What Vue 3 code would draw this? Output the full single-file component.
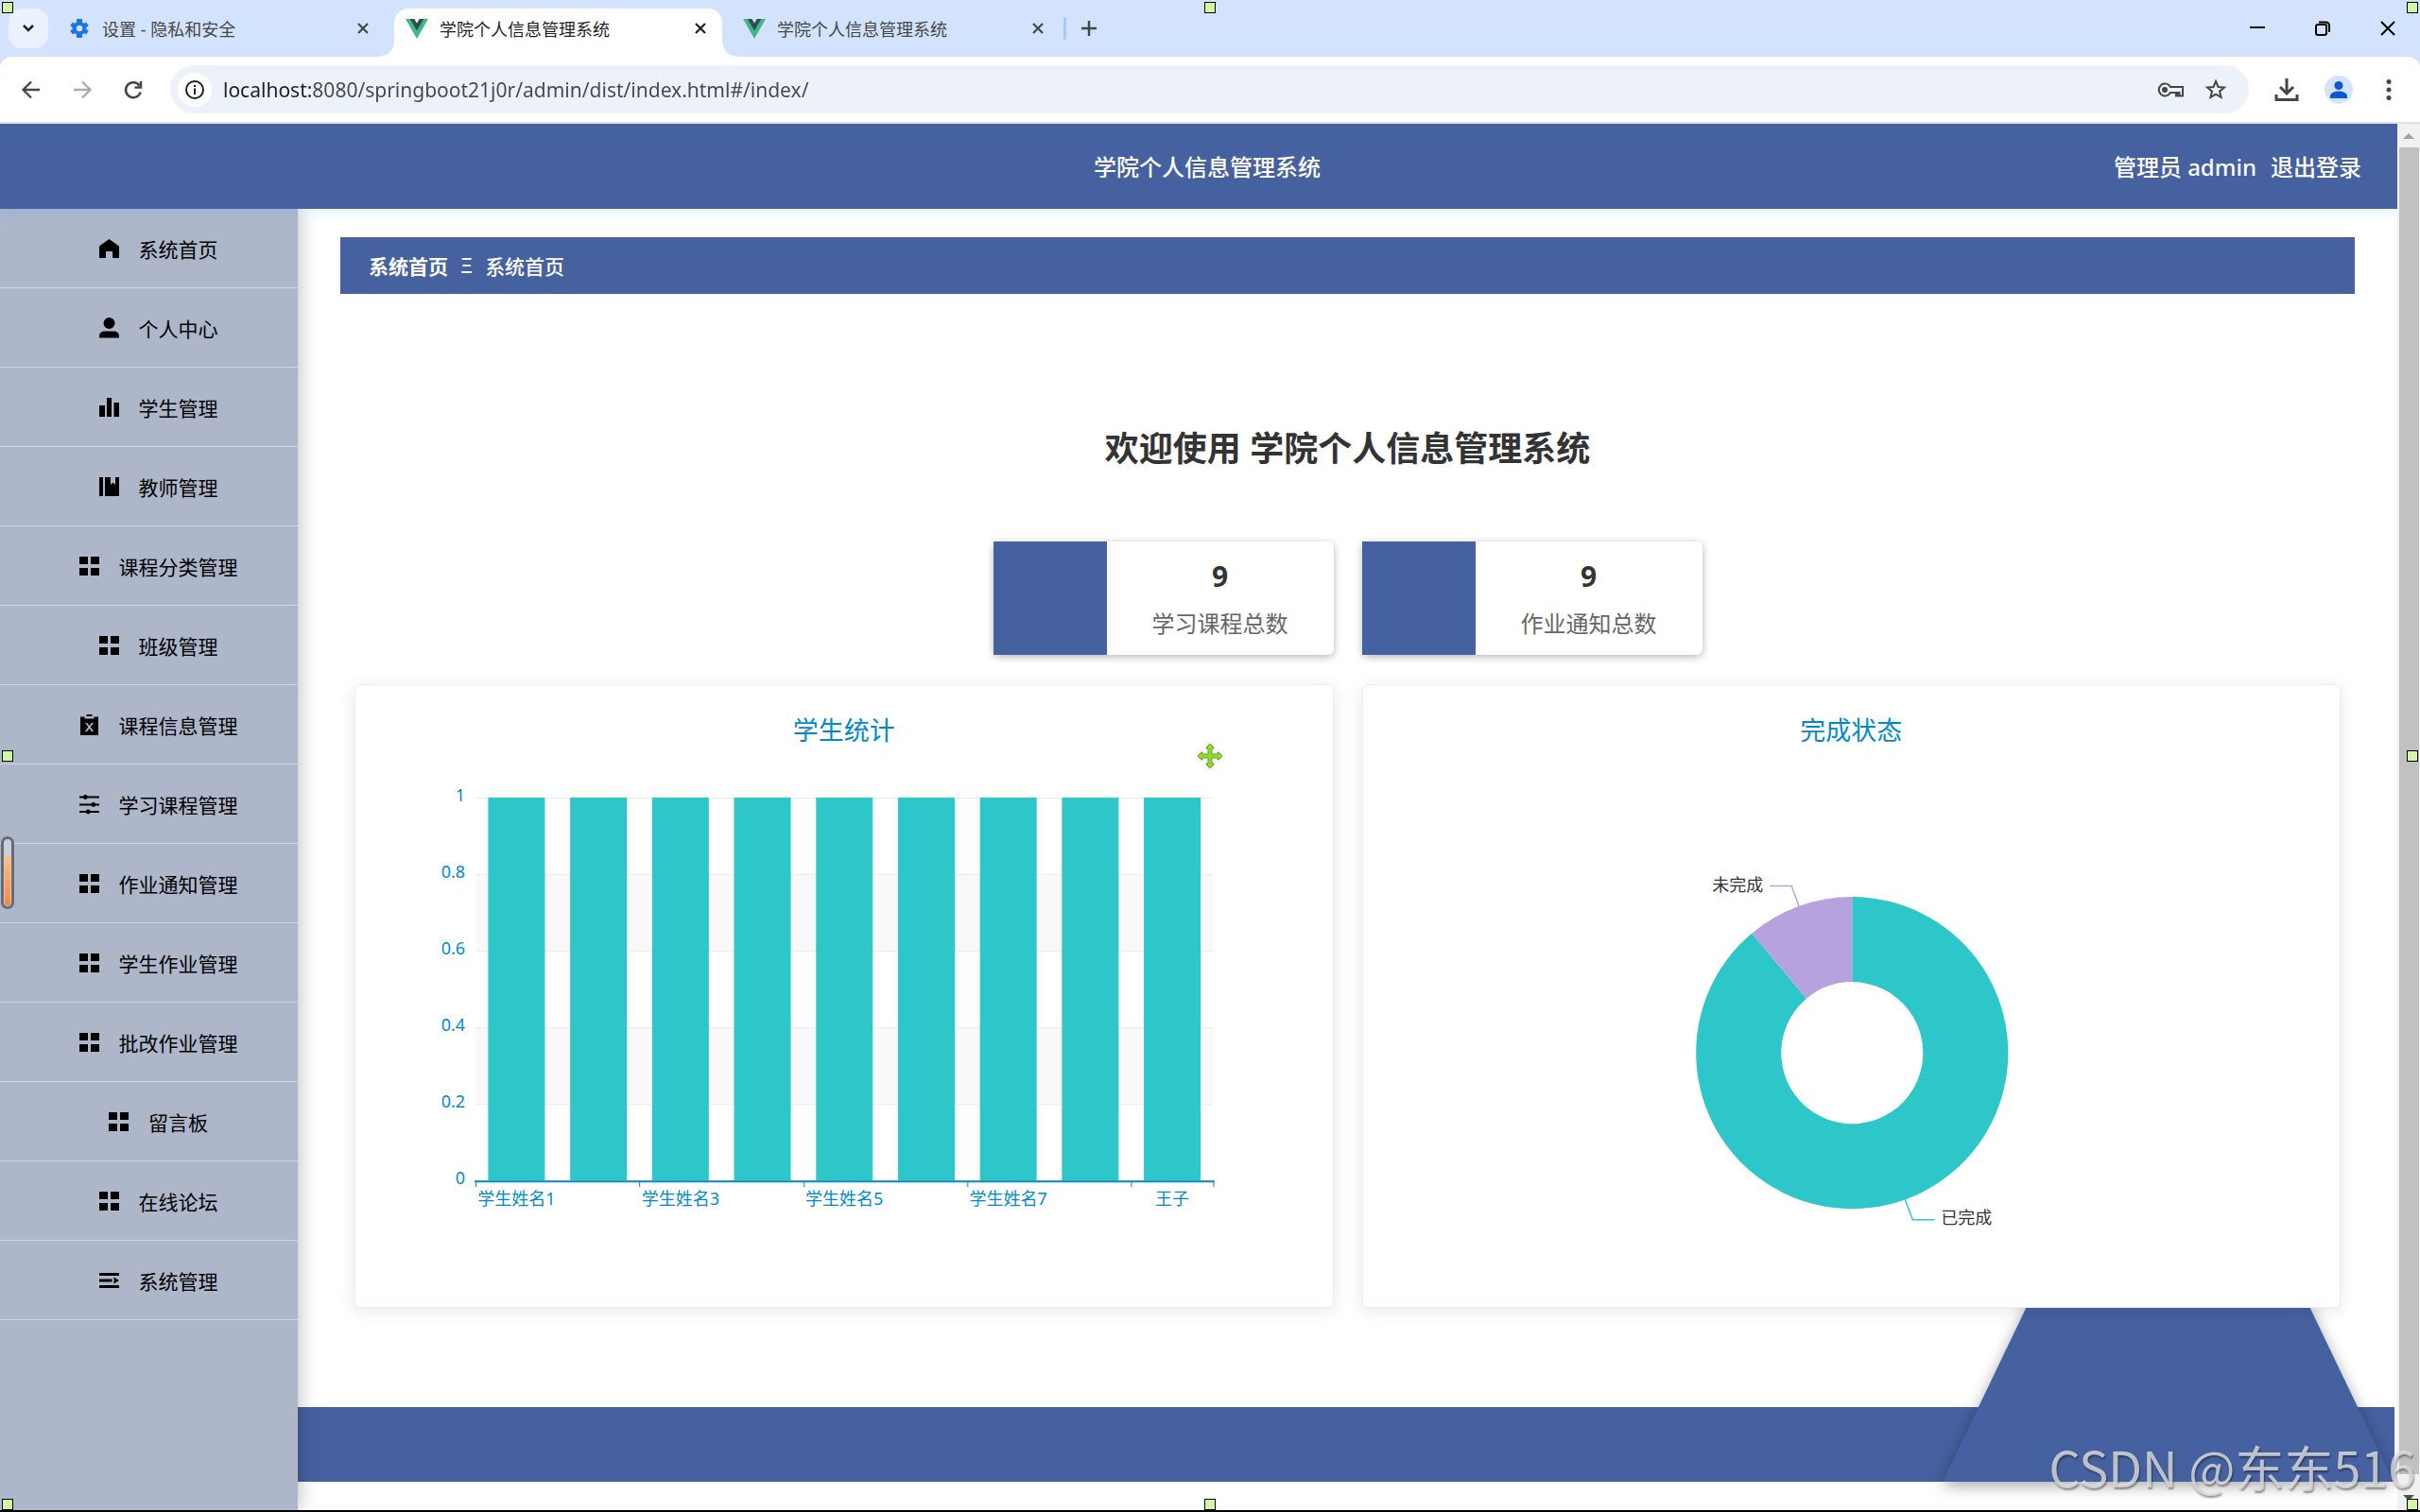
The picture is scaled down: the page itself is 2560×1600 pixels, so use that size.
<script setup>
import { ref } from 'vue'

const systemName = '学院个人信息管理系统'
const url = ref('localhost:8080/springboot21j0r/admin/dist/index.html#/index/')

const tabs = [
  { title: '设置 - 隐私和安全', icon: 'gear', active: false },
  { title: systemName, icon: 'vue', active: true },
  { title: systemName, icon: 'vue', active: false }
]

const menu = [
  { label: '系统首页', icon: 'home' },
  { label: '个人中心', icon: 'user' },
  { label: '学生管理', icon: 'bars' },
  { label: '教师管理', icon: 'book' },
  { label: '课程分类管理', icon: 'grid' },
  { label: '班级管理', icon: 'grid' },
  { label: '课程信息管理', icon: 'clip' },
  { label: '学习课程管理', icon: 'sliders' },
  { label: '作业通知管理', icon: 'grid' },
  { label: '学生作业管理', icon: 'grid' },
  { label: '批改作业管理', icon: 'grid' },
  { label: '留言板', icon: 'grid' },
  { label: '在线论坛', icon: 'grid' },
  { label: '系统管理', icon: 'list' }
]

const menuIcons = {
  home: 'M10.500 0 21 7.500V20h-7v-7h-7v7H0V7.500z',
  user: 'M10.500-1a6 6 0 0 1 0 12a6 6 0 0 1 0-12zM6 13.500h9q6 0 6 5.500v1.500H0V19q0-5.500 6-5.500z',
  bars: 'M0 8h6v12H0zM8 0h5v20H8zM15.500 5h5.500v15h-5.500z',
  book: 'M0 0h4v20H0zM6 0h6v8l2.500-2.500L17 8V0h4v20H6z',
  grid: 'M0 0h9v8H0zM12 0h9v8h-9zM0 12h9v8H0zM12 12h9v8h-9z',
  clip: 'M7.500-1h6v2h-6zM1 1.500h4.500v2h10v-2H20V21H1zM6 8l3.400 4.200L5.800 17h2.300l2.400-3.300 2.400 3.300h2.300l-3.600-4.800L15 8h-2.200l-2.300 2.900L8.200 8z',
  sliders: 'M0 1.500h4a2.500 2.500 0 0 1 4.500 0H21v2H8.500a2.500 2.500 0 0 1-4.500 0H0zM0 9.500h12.500a2.500 2.500 0 0 1 4.500 0h4v2h-4a2.500 2.500 0 0 1-4.500 0H0zM0 17h7a2.500 2.500 0 0 1 4.500 0H21v2h-9.500a2.500 2.500 0 0 1-4.500 0H0z',
  list: 'M0 2h21v3H0zM0 8.500h13.500v3H0zM15.500 6.500l5.500 3.500-5.500 3.500zM0 15h21v3H0z'
}

const stats = [
  { value: 9, label: '学习课程总数' },
  { value: 9, label: '作业通知总数' }
]

const plot = { left: 127, right: 907, top: 51, bottom: 456 }
const students = ['学生姓名1', '学生姓名2', '学生姓名3', '学生姓名4', '学生姓名5', '学生姓名6', '学生姓名7', '学生姓名8', '王子']
const step = (plot.right - plot.left) / students.length
const bars = students.map((name, i) => ({
  name,
  x: plot.left + step * (i + 0.5),
  labelled: i % 2 === 0
}))
const ticks = [0, 2, 4, 6, 8, 9].map(i => Math.round(plot.left + step * i))
const levels = ['1', '0.8', '0.6', '0.4', '0.2', '0'].map((label, i) => ({ label, y: plot.top + i * 81 }))

const handles = ['tl', 'tc', 'tr', 'ml', 'mr', 'bl', 'bc', 'br']
</script>

<template>
  <div class="browser">
    <div class="tabstrip">
      <button class="tab-search" aria-label="搜索标签页">
        <svg width="14" height="10" viewBox="0 0 14 10"><path d="M2 2l5 5 5-5" fill="none" stroke="#1f1f1f" stroke-width="2.500" /></svg>
      </button>
      <div v-for="(tab, i) in tabs" :key="i" class="tab" :class="{ active: tab.active }">
        <svg v-if="tab.icon === 'gear'" class="favicon" viewBox="0 0 24 24">
          <path fill="#1a73e8" fill-rule="evenodd" d="M19.400 13a7.500 7.500 0 0 0 0-2l2.200-1.700-2.100-3.600-2.600 1a8 8 0 0 0-1.700-1L14.800 2H9.200l-.4 3.700a8 8 0 0 0-1.700 1l-2.600-1-2.100 3.600L4.600 11a7.500 7.500 0 0 0 0 2l-2.200 1.700 2.100 3.600 2.600-1a8 8 0 0 0 1.700 1l.4 3.700h5.600l.4-3.700a8 8 0 0 0 1.700-1l2.600 1 2.100-3.600zM12 8.700a3.300 3.300 0 1 1 0 6.600a3.300 3.300 0 0 1 0-6.600z" />
        </svg>
        <svg v-else class="favicon" viewBox="0 0 24 24">
          <path fill="#41b883" d="M0 2h9l3 5 3-5h9L12 23z" />
          <path fill="#35495e" d="M4.800 2H9.300l2.700 4.700L14.700 2h4.500L12 14.500z" />
        </svg>
        <span class="tab-title">{{ tab.title }}</span>
        <button class="tab-close" aria-label="关闭">
          <svg width="14" height="14" viewBox="0 0 14 14"><path d="M2 2l10 10M12 2L2 12" fill="none" stroke="currentColor" stroke-width="2.200" /></svg>
        </button>
      </div>
      <span class="tab-divider"></span>
      <button class="new-tab" aria-label="新标签页">
        <svg width="18" height="18" viewBox="0 0 18 18"><path d="M9 1v16M1 9h16" fill="none" stroke="#444746" stroke-width="2.500" /></svg>
      </button>
      <div class="window-controls">
        <button aria-label="最小化"><svg width="16" height="16" viewBox="0 0 16 16"><path d="M0 7h16" stroke="#000" stroke-width="2" /></svg></button>
        <button aria-label="还原"><svg width="16" height="16" viewBox="0 0 16 16" fill="none" stroke="#000" stroke-width="2"><rect x="1" y="4" width="11" height="11" rx="2" /><path d="M4 1.500h7q4 0 4 4V12" /></svg></button>
        <button aria-label="关闭窗口"><svg width="16" height="16" viewBox="0 0 16 16"><path d="M1 1l14 14M15 1L1 15" stroke="#000" stroke-width="2" /></svg></button>
      </div>
    </div>

    <div class="toolbar">
      <div class="nav-buttons">
        <button aria-label="后退"><svg width="22" height="22" viewBox="0 0 22 22" fill="none" stroke="#444746" stroke-width="2.300"><path d="M20 11H3M11 2.500L2.500 11l8.500 8.500" /></svg></button>
        <button aria-label="前进"><svg width="22" height="22" viewBox="0 0 22 22" fill="none" stroke="#a9abab" stroke-width="2.300"><path d="M2 11h17M11 2.500l8.500 8.500-8.500 8.500" /></svg></button>
        <button aria-label="重新加载"><svg width="22" height="22" viewBox="0 0 22 22" fill="none" stroke="#444746" stroke-width="2.500"><path d="M18.700 13.500A8 8 0 1 1 17.500 6.500M19 2v6.500h-6.500" /></svg></button>
      </div>
      <div class="omnibox">
        <button class="site-info" aria-label="网站信息">
          <svg width="22" height="22" viewBox="0 0 22 22" fill="none" stroke="#1f1f1f" stroke-width="2"><circle cx="11" cy="11" r="9" /><path d="M11 9.500v6.500M11 6v2" /></svg>
        </button>
        <input v-model="url" class="address" type="text" aria-label="地址" spellcheck="false" />
        <button class="omni-action" aria-label="密码">
          <svg width="28" height="18" viewBox="0 0 28 18" fill="none" stroke="#444746" stroke-width="2"><path d="M14 6A6.500 6.500 0 1 0 14 12h6v3.500h2V12h1.500v3.500H27V6z" /><circle cx="8" cy="9" r="3" fill="#444746" stroke="none" /></svg>
        </button>
        <button class="omni-action" aria-label="收藏">
          <svg width="24" height="24" viewBox="0 0 24 24" fill="none" stroke="#444746" stroke-width="2"><path d="M12 3l2.500 6 6.500.5-5 4.200 1.600 6.300L12 16.600 6.400 20 8 13.700 3 9.500 9.500 9z" /></svg>
        </button>
      </div>
      <button class="tool" aria-label="下载">
        <svg width="26" height="26" viewBox="0 0 26 26" fill="none" stroke="#444746" stroke-width="3"><path d="M13 1v15M6 10l7 7 7-7M2 18v5.500h22V18" /></svg>
      </button>
      <button class="avatar" aria-label="个人资料">
        <svg width="30" height="30" viewBox="0 0 30 30"><circle cx="15" cy="15" r="15" fill="#d3e3fd" /><circle cx="15" cy="10.500" r="4.500" fill="#0b57d0" /><path d="M6 24v-2.500c0-3 5-5 9-5s9 2 9 5V24z" fill="#0b57d0" /></svg>
      </button>
      <button class="tool" aria-label="更多">
        <svg width="6" height="24" viewBox="0 0 6 24" fill="#444746"><circle cx="3" cy="3.500" r="2.500" /><circle cx="3" cy="12" r="2.500" /><circle cx="3" cy="20.500" r="2.500" /></svg>
      </button>
    </div>

    <div class="viewport">
      <div class="page">
        <header class="topbar">
          <span></span>
          <span class="system-name">{{ systemName }}</span>
          <div class="account">
            <span>管理员 admin</span>
            <a href="#">退出登录</a>
          </div>
        </header>

        <div class="body">
          <nav class="sidebar">
            <a v-for="item in menu" :key="item.label" href="#" class="menu-item">
              <svg class="menu-icon" viewBox="0 -1 21 22"><path :d="menuIcons[item.icon]" fill-rule="evenodd" /></svg>
              <span>{{ item.label }}</span>
            </a>
          </nav>

          <main class="main">
            <div class="breadcrumb">
              <b>系统首页</b>
              <span>Ξ</span>
              <span>系统首页</span>
            </div>

            <h1>欢迎使用 {{ systemName }}</h1>

            <div class="stats">
              <div v-for="stat in stats" :key="stat.label" class="stat">
                <div class="stat-color"></div>
                <div class="stat-text">
                  <strong>{{ stat.value }}</strong>
                  <span>{{ stat.label }}</span>
                </div>
              </div>
            </div>

            <div class="charts">
              <section class="card">
                <h2>学生统计</h2>
                <svg class="chart" viewBox="0 0 1033 590">
                  <rect :x="plot.left" y="132" :width="plot.right - plot.left" height="81" fill="#f9f9f9" />
                  <rect :x="plot.left" y="294" :width="plot.right - plot.left" height="81" fill="#f9f9f9" />
                  <rect v-for="level in levels" :key="'g' + level.label" :x="plot.left" :y="level.y" :width="plot.right - plot.left" height="1" fill="#eaeaea" />
                  <rect v-for="bar in bars" :key="bar.name" :x="bar.x - 30" :y="plot.top" width="60" :height="plot.bottom - plot.top" fill="#2ec7c9" />
                  <g fill="#008acd">
                    <rect :x="plot.left - 1" :y="plot.bottom" :width="plot.right - plot.left + 2" height="2" />
                    <rect v-for="x in ticks" :key="x" :x="x" :y="plot.bottom" width="1" height="7" />
                    <text v-for="level in levels" :key="level.label" x="116" :y="level.y + 4" text-anchor="end">{{ level.label }}</text>
                    <template v-for="bar in bars" :key="'l' + bar.name">
                      <text v-if="bar.labelled" :x="bar.x" y="482" text-anchor="middle">{{ bar.name }}</text>
                    </template>
                  </g>
                </svg>
              </section>

              <section class="card">
                <h2>完成状态</h2>
                <svg class="chart" viewBox="0 0 1033 590">
                  <g transform="translate(517 321)">
                    <path fill="#2ec7c9" d="M0-165A165 165 0 1 1-106.060-126.400L-48.210-57.450A75 75 0 1 0 0-75z" />
                    <path fill="#b6a2de" d="M-106.060-126.400A165 165 0 0 1 0-165V-75A75 75 0 0 0-48.210-57.450z" />
                  </g>
                  <path d="M430 144.500h23l8 22" fill="none" stroke="#b6a2de" stroke-width="1.500" />
                  <path d="M573 476l8 21.500h23" fill="none" stroke="#2ec7c9" stroke-width="1.500" />
                  <g fill="#333">
                    <text x="423" y="150" text-anchor="end">未完成</text>
                    <text x="611" y="502">已完成</text>
                  </g>
                </svg>
              </section>
            </div>

            <footer class="footer">
              <svg class="trapezoid" width="477" height="223" viewBox="0 0 477 223"><path d="M0 223L107 0H370L477 223z" fill="#4661a0" /></svg>
            </footer>
          </main>
        </div>
      </div>

      <div class="scrollbar">
        <svg width="12" height="6" viewBox="0 0 12 6"><path d="M0 6l6-6 6 6z" fill="#a3a3a3" /></svg>
        <div class="thumb"></div>
        <svg width="12" height="6" viewBox="0 0 12 6"><path d="M0 0h12L6 6z" fill="#505050" /></svg>
      </div>
    </div>

    <span v-for="h in handles" :key="h" class="handle" :class="h"></span>
    <svg class="move" width="28" height="28" viewBox="0 0 28 28">
      <path d="M14 1l4 4v1h-2v6h6v-2h1l4 4-4 4h-1v-2h-6v6h2v1l-4 4-4-4v-1h2v-6H6v2H5l-4-4 4-4h1v2h6V6h-2V5z" fill="#8edb2c" stroke="#62a51a" />
    </svg>
    <div class="gauge"><i></i></div>
    <div class="watermark">CSDN @东东516</div>
  </div>
</template>

<style>
body {
  margin: 0;
}
</style>

<style scoped>
.browser {
  position: relative;
  display: flex;
  flex-direction: column;
  box-sizing: border-box;
  min-height: 100vh;
  overflow: hidden;
  border-bottom: 2px solid #000;
  background: #fff;
  font-family: "Noto Sans", "Noto Sans CJK SC", sans-serif;
  color: #333;
}

button {
  display: flex;
  align-items: center;
  justify-content: center;
  padding: 0;
  border: 0;
  background: none;
}

a {
  color: inherit;
  text-decoration: none;
}

svg {
  display: block;
  flex: none;
}

.tabstrip {
  display: flex;
  align-items: center;
  height: 60px;
  background: #d3e3fd;
}

.tab-search {
  width: 42px;
  height: 42px;
  margin: 0 9px;
  border-radius: 14px;
  background: #ebf1fd;
}

.tab {
  position: relative;
  display: flex;
  align-items: center;
  gap: 12px;
  box-sizing: border-box;
  width: 347px;
  height: 42px;
  margin-right: 10px;
  padding: 0 11px 0 12px;
  font-size: 18px;
  color: #444746;
}

.tab:nth-of-type(3) {
  margin-right: 4px;
}

.tab.active {
  align-self: flex-end;
  height: 51px;
  padding-bottom: 9px;
  border-radius: 15px 15px 0 0;
  background: #fff;
  color: #1f1f1f;
}

.tab.active::before,
.tab.active::after {
  content: "";
  position: absolute;
  bottom: 0;
  width: 15px;
  height: 15px;
}

.tab.active::before {
  right: 100%;
  background: radial-gradient(circle at 0 0, transparent 14px, #fff 15px);
}

.tab.active::after {
  left: 100%;
  background: radial-gradient(circle at 100% 0, transparent 14px, #fff 15px);
}

.favicon {
  width: 24px;
  height: 24px;
}

.tab-title {
  flex: 1;
}

.tab-close,
.new-tab {
  width: 24px;
  height: 24px;
  color: inherit;
}

.tab-divider {
  width: 3px;
  height: 24px;
  border-radius: 2px;
  background: #a8c7fa;
}

.new-tab {
  margin-left: 12px;
}

.window-controls {
  display: flex;
  margin-left: auto;
}

.window-controls button {
  width: 69px;
  height: 60px;
}

.toolbar {
  display: flex;
  align-items: center;
  box-sizing: border-box;
  height: 71px;
  padding: 0 30px 0 0;
  border-bottom: 2px solid #dfe1e3;
  border-radius: 12px 12px 0 0;
  background: #fff;
}

.browser::before {
  content: "";
  position: absolute;
  z-index: -1;
  top: 60px;
  right: 0;
  left: 0;
  height: 12px;
  background: #d3e3fd;
}

.browser {
  isolation: isolate;
}

.nav-buttons {
  display: flex;
  gap: 18px;
  padding: 0 21px 0 15px;
}

.nav-buttons button {
  width: 36px;
  height: 36px;
}

.omnibox {
  display: flex;
  flex: 1;
  align-items: center;
  height: 51px;
  border-radius: 26px;
  background: #ecf1fa;
  padding: 0 20px 0 8px;
}

.site-info {
  width: 36px;
  height: 36px;
  border-radius: 50%;
  background: #fff;
}

.address {
  flex: 1;
  margin: 0 12px;
  padding: 0;
  border: 0;
  outline: 0;
  background: linear-gradient(90deg, #1f1f1f 92px, #474747 92px);
  background-clip: text;
  -webkit-text-fill-color: transparent;
  font-family: inherit;
  font-size: 21px;
}

.omni-action {
  width: 30px;
  height: 36px;
  margin-left: 18px;
}

.tool {
  height: 36px;
}

.toolbar > .tool {
  margin-left: 27px;
}

.avatar {
  margin-left: 27px;
}

.toolbar > .tool:last-child {
  margin-left: 35px;
}

.viewport {
  display: flex;
  flex: 1;
}

.page {
  display: flex;
  flex: 1;
  flex-direction: column;
  min-width: 0;
  overflow: hidden;
}

.topbar {
  position: relative;
  z-index: 3;
  display: grid;
  grid-template-columns: 1fr auto 1fr;
  align-items: center;
  box-sizing: border-box;
  height: 90px;
  padding: 0 38px 2px 56px;
  background: #4661a0;
  box-shadow: 0 2px 12px rgba(64, 158, 255, 0.2);
  color: #fff;
  font-size: 24px;
  font-weight: 500;
}

.account {
  display: flex;
  justify-content: flex-end;
  gap: 15px;
}

.body {
  display: flex;
  flex: 1;
}

.sidebar {
  position: relative;
  z-index: 2;
  width: 315px;
  background: #aeb6ca;
  box-shadow: 0 0 20px rgba(0, 0, 0, 0.3);
}

.menu-item {
  display: flex;
  align-items: center;
  justify-content: center;
  gap: 21px;
  box-sizing: border-box;
  height: 84px;
  padding-left: 20px;
  border-bottom: 1px solid #d3d6dc;
  color: #000;
  font-size: 21px;
}

.menu-icon {
  width: 21px;
  height: 22px;
}

.main {
  display: flex;
  flex: 1;
  flex-direction: column;
  min-width: 0;
}

.breadcrumb {
  display: flex;
  align-items: center;
  gap: 13px;
  height: 60px;
  margin: 30px 45px 0;
  padding: 0 30px;
  background: #4661a0;
  color: #fff;
  font-size: 21px;
  font-weight: 500;
}

h1 {
  margin: 137px 0 71px;
  font-size: 36px;
  line-height: 54px;
  text-align: center;
}

.stats {
  display: flex;
  justify-content: center;
  gap: 30px;
}

.stat {
  display: flex;
  width: 360px;
  height: 120px;
  border-radius: 6px;
  background: #fff;
  box-shadow: 0 2px 8px rgba(0, 0, 0, 0.3);
}

.stat-color {
  width: 120px;
  background: #4661a0;
}

.stat-text {
  display: flex;
  flex: 1;
  flex-direction: column;
  align-items: center;
  justify-content: center;
  padding-top: 4px;
  line-height: 50px;
  color: #666;
  font-size: 24px;
}

.stat-text strong {
  color: #333;
  font-size: 30px;
}

.charts {
  position: relative;
  z-index: 1;
  display: grid;
  grid-template-columns: 1fr 1fr;
  gap: 30px;
  margin: 31px 60px 105px;
}

.card {
  border: 1px solid #ebeef5;
  border-radius: 6px;
  background: #fff;
  box-shadow: 0 3px 18px rgba(0, 0, 0, 0.1);
}

h2 {
  margin: 0;
  padding-top: 28px;
  color: #008acd;
  font-size: 27px;
  font-weight: 400;
  line-height: 40px;
  text-align: center;
}

.chart {
  width: 100%;
  font-size: 18px;
}

.footer {
  position: relative;
  height: 79px;
  margin-right: 3px;
  background: #4661a0;
}

.trapezoid {
  position: absolute;
  right: 1px;
  bottom: 0;
  filter: drop-shadow(0 4px 8px rgba(0, 0, 0, 0.35));
}

.scrollbar {
  position: relative;
  display: flex;
  flex-direction: column;
  align-items: center;
  box-sizing: border-box;
  width: 24px;
  padding: 10px 0;
  background: #f1f1f1;
}

.thumb {
  flex: 1;
  width: 21px;
  margin: 9px 0 22px;
  background: #c1c1c1;
}

.handle {
  position: absolute;
  z-index: 5;
  box-sizing: border-box;
  width: 12px;
  height: 12px;
  border: 1px solid #000;
  background: #d4f7a6;
}

.tl, .tc, .tr {
  top: 2px;
}

.ml, .mr {
  top: calc(50% - 5px);
}

.bl, .bc, .br {
  bottom: 0;
}

.tl, .ml, .bl {
  left: 2px;
}

.tc, .bc {
  left: calc(50% - 6px);
}

.tr, .mr, .br {
  right: 2px;
}

.move {
  position: absolute;
  z-index: 5;
  top: calc(50% - 13px);
  left: calc(50% - 14px);
}

.gauge {
  position: absolute;
  z-index: 5;
  top: 885px;
  left: 1px;
  display: flex;
  align-items: flex-end;
  box-sizing: border-box;
  width: 14px;
  height: 77px;
  padding: 1px;
  border: 3px solid #686b73;
  border-radius: 7px;
  background: #c9cedb;
}

.gauge i {
  width: 100%;
  height: 52px;
  background: linear-gradient(#fdc07c, #ff8438);
}

.watermark {
  position: absolute;
  z-index: 4;
  right: 5px;
  bottom: 8px;
  color: rgba(225, 225, 225, 0.8);
  font-family: "Noto Sans CJK SC", sans-serif;
  font-size: 52px;
  font-weight: 400;
  line-height: 76px;
  text-shadow: 1px 2px 2px rgba(0, 0, 0, 0.4);
}
</style>
